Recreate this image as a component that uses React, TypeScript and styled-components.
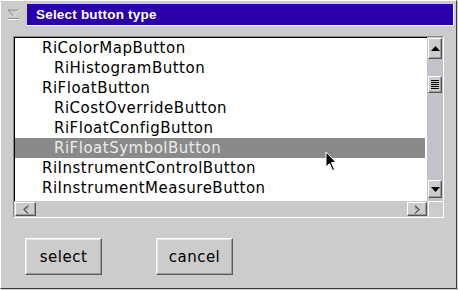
import styled, { createGlobalStyle } from "styled-components"

const GlobalStyle = createGlobalStyle`
  body {
    margin: 0;
    background: #cccccc;
  }
`

const Window = styled.div`
  position: relative;
  width: 457px;
  height: 289px;
  box-sizing: border-box;
  background: #cccccc;
  border-style: solid;
  border-width: 1px;
  border-color: #ffffff #3a3a3a #3a3a3a #ffffff;
  display: flex;
  flex-direction: column;
  font-family: "DejaVu Sans", sans-serif;
`

const TitleRow = styled.div`
  display: flex;
  height: 26px;
`

const MenuButton = styled.div`
  width: 25px;
  display: flex;
  align-items: flex-start;
  justify-content: center;
  padding-top: 8px;
  box-sizing: border-box;
`

const TitleBar = styled.div`
  flex: 1;
  margin: 3px 2px 0 1px;
  height: 22px;
  box-sizing: border-box;
  background: #2a00aa;
  border-right: 1px solid #ffffff;
  border-bottom: 1px solid #ffffff;
  color: #ffffff;
  font-family: "Liberation Sans", Arial, sans-serif;
  font-weight: bold;
  font-size: 13.5px;
  letter-spacing: 0.2px;
  display: flex;
  align-items: center;
  padding-left: 9px;
`

const ListFrame = styled.div`
  margin: 9px 12px 0 12px;
  height: 182px;
  box-sizing: border-box;
  border-style: solid;
  border-width: 1px;
  border-color: #8a8a8a #ffffff #ffffff #8a8a8a;
  display: grid;
  grid-template-columns: 1fr 16px;
  grid-template-rows: 1fr 16px;
`

const ListBox = styled.div`
  background: #ffffff;
  border-top: 1px solid #000000;
  border-left: 1px solid #000000;
  overflow: hidden;
  padding-top: 0;
`

const Item = styled.div<{ $level: number; $selected?: boolean }>`
  height: 20px;
  line-height: 20px;
  margin-right: 2px;
  padding-left: ${({ $level }): string => ($level ? "39px" : "27px")};
  font-size: 15px;
  letter-spacing: 0.5px;
  white-space: nowrap;
  color: ${({ $selected }): string => ($selected ? "#ececec" : "#000000")};
  background: ${({ $selected }): string => ($selected ? "#8a8a8a" : "transparent")};
`

const VScroll = styled.div`
  background: #c4c1c9;
  display: flex;
  flex-direction: column;
  padding: 1px 1px 3px 1px;
`

const HScroll = styled.div`
  background: #c9c9c9;
  display: flex;
  justify-content: space-between;
  padding: 1px 0 1px 1px;
`

const Corner = styled.div`
  border-top: 1px solid #ffffff;
  border-left: 1px solid #ffffff;
  margin: 0 0 0 1px;
`

const ScrollButton = styled.div<{ $w?: number; $h?: number }>`
  width: ${({ $w }): string => ($w ? `${$w}px` : "auto")};
  height: ${({ $h }): string => ($h ? `${$h}px` : "auto")};
  box-sizing: border-box;
  background: #cccccc;
  border-style: solid;
  border-width: 1px;
  border-color: #ffffff #555555 #555555 #ffffff;
  box-shadow: inset -1px -1px 0 #999999;
  display: flex;
  align-items: center;
  justify-content: center;
`

const Thumb = styled(ScrollButton)`
  margin-top: 17px;
  flex-direction: column;
  gap: 1px;
`

const GripLine = styled.div`
  width: 8px;
  height: 1px;
  background: #000000;
`

const DownButton = styled(ScrollButton)`
  margin-top: auto;
`

const ButtonRow = styled.div`
  display: flex;
  gap: 54px;
  padding-left: 24px;
  margin-top: 20px;
`

const PushButton = styled.button`
  width: 77px;
  height: 37px;
  box-sizing: border-box;
  background: #cccccc;
  border-style: solid;
  border-width: 1px;
  border-color: #ffffff #5a5a5a #5a5a5a #ffffff;
  box-shadow: inset -1px -1px 0 #9a9a9a, inset 1px 1px 0 #e6e6e6;
  font-family: "DejaVu Sans", sans-serif;
  font-size: 15px;
  letter-spacing: 0.5px;
  color: #000000;
  padding: 0;
`

const Cursor = styled.svg`
  position: absolute;
  left: 324px;
  top: 150px;
`

const items: { label: string; level: number; selected?: boolean }[] = [
  { label: "RiColorMapButton", level: 0 },
  { label: "RiHistogramButton", level: 1 },
  { label: "RiFloatButton", level: 0 },
  { label: "RiCostOverrideButton", level: 1 },
  { label: "RiFloatConfigButton", level: 1 },
  { label: "RiFloatSymbolButton", level: 1, selected: true },
  { label: "RiInstrumentControlButton", level: 0 },
  { label: "RiInstrumentMeasureButton", level: 0 },
]

const App = (): JSX.Element => (
  <Window>
    <GlobalStyle />
    <TitleRow>
      <MenuButton>
        <svg width="13" height="12" viewBox="0 0 13 12">
          <path d="M1 1 L12 1 L6.5 7 Z" fill="#cccccc" stroke="#8a8a8a" strokeWidth="1" />
          <path d="M12 1 L6.5 7" stroke="#ffffff" strokeWidth="1" />
          <line x1="1" y1="10.5" x2="12" y2="10.5" stroke="#ffffff" strokeWidth="1" />
          <line x1="1" y1="9.5" x2="12" y2="9.5" stroke="#8a8a8a" strokeWidth="1" />
        </svg>
      </MenuButton>
      <TitleBar>Select button type</TitleBar>
    </TitleRow>

    <ListFrame>
      <ListBox>
        {items.map((it) => (
          <Item key={it.label} $level={it.level} $selected={it.selected}>
            {it.label}
          </Item>
        ))}
      </ListBox>

      <VScroll>
        <ScrollButton $h={21}>
          <svg width="9" height="5" viewBox="0 0 9 5">
            <path d="M4.5 0 L9 5 L0 5 Z" fill="#000000" />
          </svg>
        </ScrollButton>
        <Thumb $h={17}>
          <GripLine />
          <GripLine />
          <GripLine />
          <GripLine />
          <GripLine />
        </Thumb>
        <DownButton $h={18}>
          <svg width="9" height="5" viewBox="0 0 9 5">
            <path d="M0 0 L9 0 L4.5 5 Z" fill="#000000" />
          </svg>
        </DownButton>
      </VScroll>

      <HScroll>
        <ScrollButton $w={21}>
          <svg width="6" height="9" viewBox="0 0 6 9">
            <path d="M5 0.5 L1 4.5 L5 8.5" fill="none" stroke="#000000" strokeWidth="1" />
            <path d="M5.5 2 L3 4.5" fill="none" stroke="#777777" strokeWidth="1" />
          </svg>
        </ScrollButton>
        <ScrollButton $w={20}>
          <svg width="6" height="9" viewBox="0 0 6 9">
            <path d="M1 0.5 L5 4.5 L1 8.5" fill="none" stroke="#000000" strokeWidth="1" />
            <path d="M0.5 2 L3 4.5" fill="none" stroke="#777777" strokeWidth="1" />
          </svg>
        </ScrollButton>
      </HScroll>
      <Corner />
    </ListFrame>

    <ButtonRow>
      <PushButton>select</PushButton>
      <PushButton>cancel</PushButton>
    </ButtonRow>

    <Cursor width="13" height="22" viewBox="0 0 13 22">
      <path d="M1 1 L1 16 L4.5 12.5 L7.5 19.5 L9.5 18.5 L6.5 11.5 L11 11.5 Z" fill="#000000" stroke="#ffffff" strokeWidth="1" />
    </Cursor>
  </Window>
)

export default App
